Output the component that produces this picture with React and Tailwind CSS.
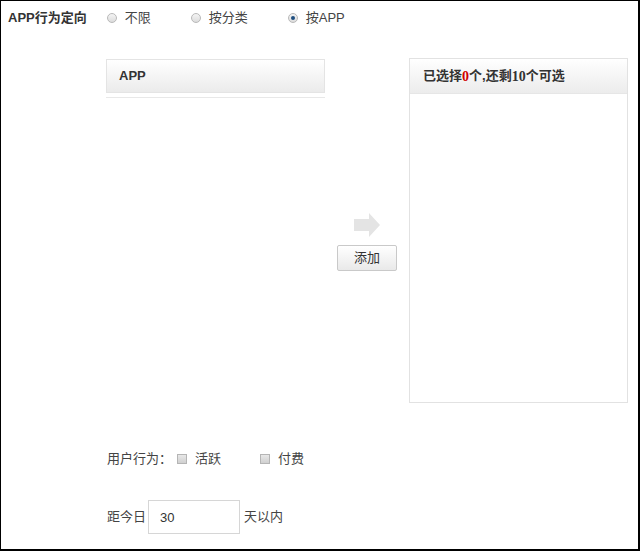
import { useState } from "react";

const font = { fontFamily: '"Liberation Sans", "Noto Sans CJK SC", sans-serif' };

const Radio = ({ checked, label, onClick }) => (
  <button type="button" onClick={onClick} className="flex items-center gap-[8px] text-[13px] text-[#444]">
    <span className="flex h-[10px] w-[10px] items-center justify-center rounded-full border border-[#b9b9b9] bg-gradient-to-b from-[#f4f4f4] to-[#dcdcdc]">
      {checked && <span className="h-[4px] w-[4px] rounded-full bg-[#1f4f80]" />}
    </span>
    <span>{label}</span>
  </button>
);

const Checkbox = ({ label }) => (
  <label className="flex items-center gap-[8px] text-[13px] text-[#444]">
    <span className="h-[10px] w-[10px] border border-[#b5b5b5] bg-gradient-to-b from-[#e8e8e8] to-[#d0d0d0]" />
    <span>{label}</span>
  </label>
);

export default function App() {
  const [mode, setMode] = useState("app");
  const [days, setDays] = useState("30");

  return (
    <div
      style={font}
      className="h-[551px] w-[640px] overflow-hidden border-t border-l border-r-2 border-b-2 border-black bg-white text-[#333]"
    >
      {/* 定向方式 */}
      <div className="flex h-[33px] items-center pl-[7px]">
        <span className="text-[13px] font-bold text-[#333]">APP行为定向</span>
        <div className="ml-[20px] flex items-center gap-[40px]">
          <Radio label="不限" checked={mode === "all"} onClick={() => setMode("all")} />
          <Radio label="按分类" checked={mode === "cat"} onClick={() => setMode("cat")} />
          <Radio label="按APP" checked={mode === "app"} onClick={() => setMode("app")} />
        </div>
      </div>

      {/* 选择区 */}
      <div className="ml-[105px] mt-[24px] flex">
        <div className="w-[219px] pt-[1px]">
          <div className="flex h-[34px] items-center border border-[#e4e4e4] bg-gradient-to-b from-white to-[#ebebeb] pl-[12px] text-[13px] font-bold text-[#333]">
            APP
          </div>
          <div className="mt-[4px] border-t border-[#e8e8e8]" />
        </div>

        <div className="flex w-[84px] flex-col items-center pt-[154px]">
          <svg width="28" height="26" viewBox="0 0 28 26">
            <path d="M1 7h15V1l11 12-11 12v-6H1z" fill="#e4e4e4" />
          </svg>
          <button
            type="button"
            className="mt-[7px] h-[26px] w-[60px] rounded-[2px] border border-[#c9c9c9] bg-gradient-to-b from-white to-[#e9e9e9] text-[13px] text-[#333]"
          >
            添加
          </button>
        </div>

        <div className="flex h-[345px] w-[219px] flex-col border border-[#e2e2e2]">
          <div className="flex h-[35px] items-center border-b border-[#e6e6e6] bg-gradient-to-b from-white to-[#ececec] pl-[13px] text-[13px] font-bold text-[#333]">
            已选择
            <span className="font-['Liberation_Serif'] text-[14px] text-[#d00000]">0</span>
            个,还剩
            <span className="font-['Liberation_Serif'] text-[14px]">10</span>
            个可选
          </div>
          <div className="flex-1" />
        </div>
      </div>

      {/* 用户行为 */}
      <div className="ml-[106px] mt-[46px] flex h-[20px] items-center text-[13px] text-[#444]">
        <span>用户行为：</span>
        <div className="ml-[5px] flex items-center gap-[39px]">
          <Checkbox label="活跃" />
          <Checkbox label="付费" />
        </div>
      </div>

      <div className="ml-[106px] mt-[31px] flex items-center gap-[2px] text-[13px] text-[#444]">
        <span>距今日</span>
        <input
          value={days}
          onChange={(e) => setDays(e.target.value)}
          className="h-[34px] w-[92px] border border-[#d6d6d6] pl-[11px] text-[13px] text-[#333] outline-none"
        />
        <span className="ml-[2px]">天以内</span>
      </div>
    </div>
  );
}
